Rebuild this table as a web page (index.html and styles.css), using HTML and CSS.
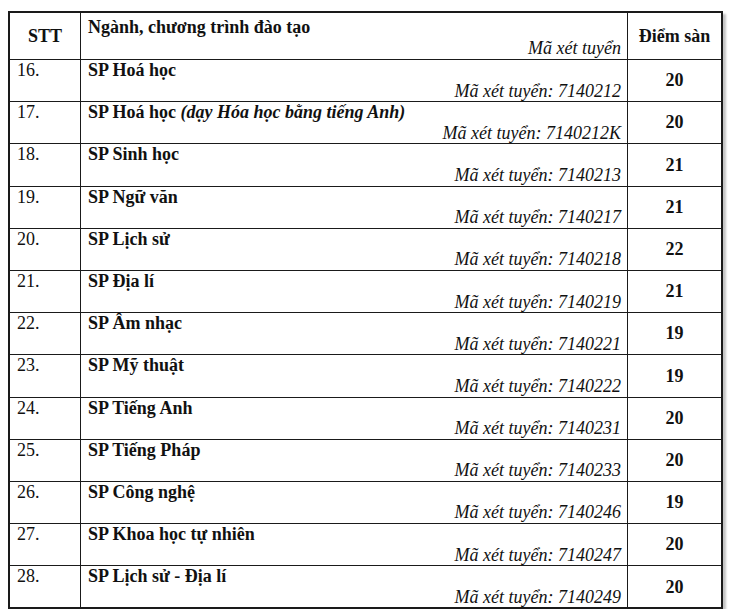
FILE: index.html
```html
<!DOCTYPE html>
<html lang="vi">
<head>
<meta charset="utf-8">
<title>Điểm sàn</title>
<link rel="stylesheet" href="styles.css">
</head>
<body>
<div class="page">
<table class="score">
  <thead>
    <tr>
      <th class="stt">STT</th>
      <th class="major"><div class="name">Ngành, chương trình đào tạo</div><div class="code">Mã xét tuyển</div></th>
      <th class="pts">Điểm sàn</th>
    </tr>
  </thead>
  <tbody>
    <tr><td class="stt">16.</td><td class="major"><div class="name">SP Hoá học</div><div class="code">Mã xét tuyển: 7140212</div></td><td class="pts">20</td></tr>
    <tr><td class="stt">17.</td><td class="major"><div class="name">SP Hoá học <i>(dạy Hóa học bằng tiếng Anh)</i></div><div class="code">Mã xét tuyển: 7140212K</div></td><td class="pts">20</td></tr>
    <tr><td class="stt">18.</td><td class="major"><div class="name">SP Sinh học</div><div class="code">Mã xét tuyển: 7140213</div></td><td class="pts">21</td></tr>
    <tr><td class="stt">19.</td><td class="major"><div class="name">SP Ngữ văn</div><div class="code">Mã xét tuyển: 7140217</div></td><td class="pts">21</td></tr>
    <tr><td class="stt">20.</td><td class="major"><div class="name">SP Lịch sử</div><div class="code">Mã xét tuyển: 7140218</div></td><td class="pts">22</td></tr>
    <tr><td class="stt">21.</td><td class="major"><div class="name">SP Địa lí</div><div class="code">Mã xét tuyển: 7140219</div></td><td class="pts">21</td></tr>
    <tr><td class="stt">22.</td><td class="major"><div class="name">SP Âm nhạc</div><div class="code">Mã xét tuyển: 7140221</div></td><td class="pts">19</td></tr>
    <tr><td class="stt">23.</td><td class="major"><div class="name">SP Mỹ thuật</div><div class="code">Mã xét tuyển: 7140222</div></td><td class="pts">19</td></tr>
    <tr><td class="stt">24.</td><td class="major"><div class="name">SP Tiếng Anh</div><div class="code">Mã xét tuyển: 7140231</div></td><td class="pts">20</td></tr>
    <tr><td class="stt">25.</td><td class="major"><div class="name">SP Tiếng Pháp</div><div class="code">Mã xét tuyển: 7140233</div></td><td class="pts">20</td></tr>
    <tr><td class="stt">26.</td><td class="major"><div class="name">SP Công nghệ</div><div class="code">Mã xét tuyển: 7140246</div></td><td class="pts">19</td></tr>
    <tr><td class="stt">27.</td><td class="major"><div class="name">SP Khoa học tự nhiên</div><div class="code">Mã xét tuyển: 7140247</div></td><td class="pts">20</td></tr>
    <tr><td class="stt">28.</td><td class="major"><div class="name">SP Lịch sử - Địa lí</div><div class="code">Mã xét tuyển: 7140249</div></td><td class="pts">20</td></tr>
  </tbody>
</table>
</div>
</body>
</html>
```

FILE: styles.css
```css
html, body {
  margin: 0;
  padding: 0;
  background: #ffffff;
}

.page {
  padding: 11px 0 0 8px;
}

.score {
  border-collapse: separate;
  border-spacing: 0;
  border-top: 2px solid #1a1a1a;
  border-left: 2px solid #1a1a1a;
  font-family: "Liberation Serif", "Times New Roman", serif;
  font-size: 18px;
  line-height: 20.6px;
  color: #111111;
  box-shadow: 3px 3px 2px #c4c4c4;
  table-layout: fixed;
  width: 715px;
}

.score th,
.score td {
  padding: 0;
  border-right: 1px solid #1a1a1a;
  border-bottom: 1px solid #1a1a1a;
}

.score th {
  height: 46px;
  font-weight: bold;
}

.score .stt {
  width: 63px;
  padding-left: 7px;
  text-align: left;
  vertical-align: top;
  font-weight: normal;
}

.score th.stt {
  width: 70px;
  padding-left: 0;
  text-align: center;
  vertical-align: middle;
  font-weight: bold;
}

.score .major {
  width: 533px;
  padding-left: 7px;
  padding-right: 6px;
  text-align: left;
  vertical-align: top;
}

.score th.major {
  padding-top: 4px;
  height: 42px;
}

.score .pts {
  width: 93px;
  border-right-width: 2px;
  text-align: center;
  vertical-align: middle;
  font-weight: bold;
}

.score tbody tr:last-child td {
  border-bottom-width: 2px;
}

.name {
  font-weight: bold;
}

.code {
  font-style: italic;
  font-weight: normal;
  text-align: right;
}
```
